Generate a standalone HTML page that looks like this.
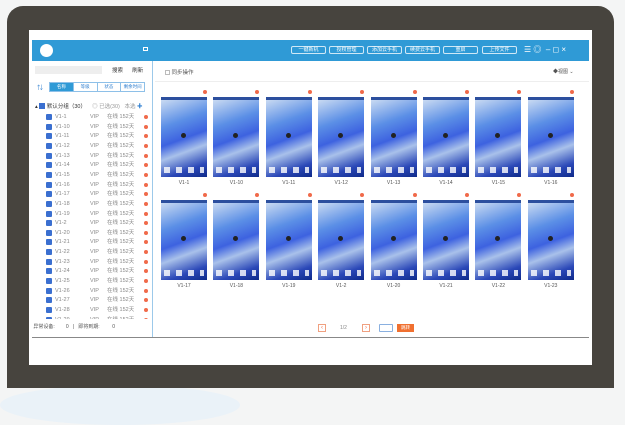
<!DOCTYPE html><html><head><style>
*{margin:0;padding:0;box-sizing:border-box}
body{width:625px;height:400px;background:#f4f5f5;position:relative;overflow:hidden;font-family:"Liberation Sans","Noto Sans CJK SC",sans-serif;font-size:5.5px;color:#666}
.a{position:absolute}
.bez{left:7px;top:6px;width:607px;height:382px;background:#47443e;border-radius:16px 16px 0 0}
.scr{left:29px;top:30px;width:563px;height:335px;background:#fff}
.hdr{left:32px;top:40px;width:557px;height:21px;background:#2f9ad6}
.btn{position:absolute;top:46px;height:8px;border:1px solid #cfe8f6;border-radius:2px;color:#fff;font-size:5px;text-align:center;line-height:6px;width:35px}
.side{left:32px;top:61px;width:121px;height:277px;border-right:1px solid #9cc9ea}
.row{position:absolute;left:14px;height:8px;width:104px;font-size:5.5px;line-height:8px;color:#888}
.cb{position:absolute;left:0;top:1px;width:6px;height:6px;background:#3a6fd0;border-radius:1px}
.dot{position:absolute;width:4px;height:4px;border-radius:50%;background:#f06a4a}
.ph{position:absolute;width:46px;height:80px;background:linear-gradient(160deg,#c9daf2 0%,#5b8fe6 30%,#3d62e0 50%,#a9c1ea 65%,#2b48b8 85%,#0e2a8a 100%);border-top:3px solid #2c4f9e}
.ph:before{content:"";position:absolute;left:20px;top:33px;width:5px;height:5px;border-radius:50%;background:#222}
.ph:after{content:"";position:absolute;left:3px;bottom:4px;width:40px;height:6px;background:repeating-linear-gradient(90deg,#fff 0 6px,transparent 6px 12px);opacity:.8}
.lb{position:absolute;width:46px;text-align:center;font-size:5px;color:#555}
</style></head><body>
<div class="a" style="left:0px;top:385px;width:240px;height:40px;border-radius:50%;background:#eaf2f8"></div>
<div class="a bez"></div>
<div class="a scr"></div>
<div class="a hdr"></div>
<div class="a" style="left:40px;top:44px;width:13px;height:13px;border-radius:50%;background:#fff"></div>
<div class="a" style="left:143px;top:47px;width:5px;height:4px;border:1px solid #fff"></div>
<div class="btn" style="left:291px">一键新机</div>
<div class="btn" style="left:329px">授权管理</div>
<div class="btn" style="left:367px">添加云手机</div>
<div class="btn" style="left:405px">续费云手机</div>
<div class="btn" style="left:443px">重启</div>
<div class="btn" style="left:482px">上传文件</div>
<div class="a" style="left:524px;top:46px;color:#fff;font-size:8px;line-height:8px">☰ ◎ &nbsp;– ◻ ×</div>
<div class="a side"></div>
<div class="a" style="left:35px;top:66px;width:67px;height:8px;background:#eee"></div>
<div class="a" style="left:112px;top:66px;font-size:5.5px;color:#333">搜索 &nbsp;&nbsp;&nbsp;&nbsp;&nbsp;刷新</div>
<div class="a" style="left:37px;top:83px;color:#2f7fd0;font-size:6px">⇅</div>
<div class="a" style="left:49px;top:82px;width:96px;height:10px;border:1px solid #8ec0e8;display:flex;font-size:4.5px;line-height:8px;text-align:center;color:#2f7fd0">
<div style="flex:1;background:#2f9ad6;color:#fff">名称</div><div style="flex:1;border-left:1px solid #8ec0e8">等级</div><div style="flex:1;border-left:1px solid #8ec0e8">状态</div><div style="flex:1;border-left:1px solid #8ec0e8">剩余时间</div></div>
<div class="a" style="left:35px;top:102px;font-size:5.5px;color:#333">▴ <span style="display:inline-block;width:6px;height:6px;background:#3a6fd0;vertical-align:-1px"></span> 默认分组（30） <span style="color:#999">&nbsp;&nbsp;&nbsp;◎ 已选(30) &nbsp;&nbsp;本选</span> <span style="color:#2f7fd0">✚</span></div>
<div class="a" id="rows" style="left:32px;top:113px;width:120px;height:206px;overflow:hidden"></div>
<div class="a" style="left:32px;top:323px;font-size:5px;color:#555">&nbsp;异常设备: &nbsp;&nbsp;&nbsp;&nbsp;&nbsp;&nbsp;&nbsp;0 &nbsp;&nbsp;| &nbsp;&nbsp;即将到期: &nbsp;&nbsp;&nbsp;&nbsp;&nbsp;&nbsp;&nbsp;&nbsp;0</div>
<div class="a" style="left:32px;top:337px;width:557px;height:1px;background:#888"></div>
<div class="a" style="left:165px;top:68px;font-size:5.5px;color:#555"><span style="display:inline-block;width:5px;height:5px;border:1px solid #bbb;vertical-align:-1px"></span> 同步操作</div>
<div class="a" style="left:553px;top:68px;font-size:5px;color:#555">◆视图 ⌄</div>
<div class="a" style="left:155px;top:81px;width:434px;height:1px;background:#eee"></div>
<div id="ph"></div>
<div class="a" style="left:318px;top:324px;width:8px;height:8px;border:1px solid #f0a080;color:#f07050;font-size:6px;line-height:6px;text-align:center">‹</div>
<div class="a" style="left:340px;top:325px;font-size:5px;color:#888">1/2</div>
<div class="a" style="left:362px;top:324px;width:8px;height:8px;border:1px solid #f0a080;color:#f07050;font-size:6px;line-height:6px;text-align:center">›</div>
<div class="a" style="left:379px;top:324px;width:14px;height:8px;border:1px solid #8ab0e0;border-radius:1px"></div>
<div class="a" style="left:397px;top:324px;width:17px;height:8px;background:#f07030;color:#fff;font-size:4.5px;line-height:8px;text-align:center">跳转</div>
<script>
var n=["1","10","11","12","13","14","15","16","17","18","19","2","20","21","22","23","24","25","26","27","28","29"],h="";
n.forEach(function(v,i){var y=i*9.65;h+='<div class="row" style="top:'+y+'px"><div class="cb"></div><span style="position:absolute;left:9px">V1-'+v+'</span><span style="position:absolute;left:44px">VIP</span><span style="position:absolute;left:61px">在线 152天</span><div class="dot" style="left:98px;top:2px"></div></div>'});
document.getElementById("rows").innerHTML=h;
var l1=["1","10","11","12","13","14","15","16"],l2=["17","18","19","2","20","21","22","23"],p="";
for(var i=0;i<8;i++){var x=161+i*52.4;
[[97,l1],[200,l2]].forEach(function(r){p+='<div class="dot" style="left:'+(x+42)+'px;top:'+(r[0]-7)+'px"></div><div class="ph" style="left:'+x+'px;top:'+r[0]+'px"></div><div class="lb" style="left:'+x+'px;top:'+(r[0]+83)+'px">V1-'+r[1][i]+'</div>'});}
document.getElementById("ph").innerHTML=p;
</script>
</body></html>
